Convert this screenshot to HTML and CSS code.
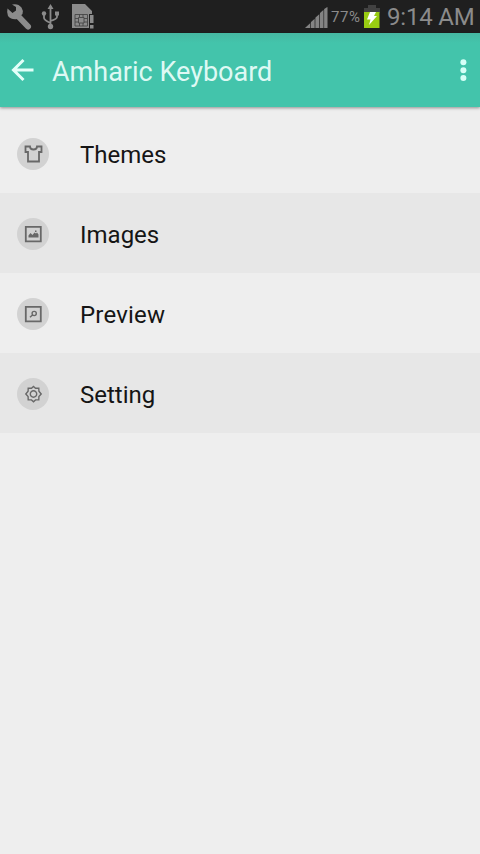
FILE: index.html
```html
<!DOCTYPE html>
<html lang="en">
<head>
<meta charset="utf-8">
<title>Amharic Keyboard</title>
<link rel="stylesheet" href="styles.css">
</head>
<body>
<div class="status">
  <svg class="notices" width="100" height="33" viewBox="0 0 100 33">
    <path d="M17 15L28 26.500" fill="none" stroke="#8b8b8b" stroke-width="6" stroke-linecap="round"/>
    <path d="M7.500 8.500l5 4.500 3.500-2.500 0-3.500-4-2.500q6-1.500 9.500 3 2 3 1 6.500l-5.500 5q-5.500 1-9-3-1.500-3.500-.5-7.500z" fill="#8b8b8b"/>
    <path d="M50.500 8v18M44 15v3q0 2 6.500 5M57 15v2q0 2-6.500 4" fill="none" stroke="#8b8b8b" stroke-width="1.800"/>
    <path d="M50.500 4l3 5h-6zM55 11.500h4v4h-4z" fill="#8b8b8b"/>
    <circle cx="44" cy="13.500" r="2.200" fill="#8b8b8b"/><circle cx="50.500" cy="26.500" r="2.700" fill="#8b8b8b"/>
    <path d="M72 4h13l7 7v3.500h-3V28H72z" fill="#8b8b8b"/>
    <path d="M75 14.500h12.500V26H75zM78.500 17.500h5.500v5.500h-5.500zM75 18.500h3.500M75 22h3.500M84 18.500h3.500M84 22h3.500M79.500 14v3M83 14v3M79.500 23v3M83 23v3" fill="none" stroke="#464646" stroke-width=".9"/>
    <path d="M89 14h5v15h-5z" fill="#202020"/><path d="M90 15h3.500v8H90zM90 25h3.500v3.500H90z" fill="#8b8b8b"/>
  </svg>
  <svg class="signal" width="23" height="22" viewBox="0 0 23 22">
    <path d="M0 21l5-4.500V21zM6 15l3.500-3v9H6zM10.500 10.500l3.500-3V21h-3.500zM15 6l3.300-3v18H15zM19.200 2L22.500 0v21h-3.300z" fill="#858585"/>
    <path d="M0 21L22 0v21z" fill="#858585" opacity=".3"/>
  </svg>
  <span class="percent">77%</span>
  <svg class="battery" width="16" height="23" viewBox="0 0 16 23">
    <path d="M4 0h8v3h4v5H0V3h4z" fill="#424242"/><path d="M0 7h15.500v16H0z" fill="#99cc12"/>
    <path d="M6 7h6l-2 4h3L5 20l1.500-5.500H3z" fill="#fff"/>
  </svg>
  <span class="clock">9:14 AM</span>
</div>
<header class="bar">
  <svg class="back" width="24" height="24" viewBox="0 0 24 24"><path d="M12.500 2L2.500 12l10 10M3 12h19.500" fill="none" stroke="#e3fff9" stroke-width="3"/></svg>
  <h1 class="title">Amharic Keyboard</h1>
  <svg class="more" width="8" height="24" viewBox="0 0 8 24" fill="#d5fff7"><circle cx="4.400" cy="4.200" r="3"/><circle cx="4.400" cy="12.200" r="3"/><circle cx="4.400" cy="20" r="3"/></svg>
</header>
<main class="list">
  <div class="row">
    <svg class="icon" viewBox="0 0 32 32"><circle cx="16" cy="16" r="16"/><path d="M8.500 8.500H13q0 3 3.500 3t3.500-3h4.500v5.500H22v9.500H11V14H8.500z"/></svg>
    <span class="label">Themes</span>
  </div>
  <div class="row shaded">
    <svg class="icon" viewBox="0 0 32 32"><circle cx="16" cy="16" r="16"/><path d="M8.800 8.800h15v14.500h-15z"/><path class="solid" d="M11.500 19.500v-2l2-2.500 2 2 2-2.500 1.500 1 1-1 1.500 2v3zM18 12.500h1.500V14H18z"/></svg>
    <span class="label">Images</span>
  </div>
  <div class="row">
    <svg class="icon" viewBox="0 0 32 32"><circle cx="16" cy="16" r="16"/><path d="M8.800 8.800h15v14.500h-15z"/><path class="thin" d="M15.200 17.200L13 19.300M19.300 15.500a2.100 2.100 0 1 1-4.200 0a2.100 2.100 0 1 1 4.200 0z"/></svg>
    <span class="label preview">Preview</span>
  </div>
  <div class="row shaded">
    <svg class="icon" viewBox="0 0 32 32"><circle cx="16" cy="16" r="16"/><path class="thin" d="M16.500 8.500l2 1.800 3.300-.1.100 3.100 2.300 2.700-2.300 2.500-.1 3.300-3.300.1-2 1.900-2-1.900-3.300-.1-.1-3.300-2.300-2.500 2.300-2.700.1-3.100 3.300.1z"/><path class="thin" d="M19.700 16a3.200 3.200 0 1 1-6.400 0a3.200 3.200 0 1 1 6.400 0z"/></svg>
    <span class="label">Setting</span>
  </div>
</main>
</body>
</html>
```
FILE: styles.css
```css
body {
  margin: 0;
  min-height: 854px;
  background: #eee;
  font-family: Roboto, sans-serif;
}
svg { display: block; flex: none; }
.status {
  display: flex;
  height: 33px;
  background: #1f1f1f;
  color: #8b8b8b;
  white-space: nowrap;
}
.signal { margin: 7px 3px 0 205px; }
.percent {
  width: 31px;
  margin-right: 2px;
  font-size: 15px;
  line-height: 34px;
  letter-spacing: .6px;
}
.battery { margin-top: 5px; }
.clock {
  margin-left: 7px;
  font-size: 24px;
  line-height: 34px;
  letter-spacing: -.2px;
}
.bar {
  position: relative;
  display: flex;
  align-items: center;
  box-sizing: border-box;
  height: 74px;
  padding: 0 13px 0 11px;
  background: linear-gradient(#46b8a2, #43c4ab 10px);
  box-shadow: 0 1px 3px #0006;
}
.title {
  margin: 3px auto 0 17px;
  color: #def9f4;
  font-size: 27px;
  font-weight: 400;
  line-height: 34px;
  white-space: nowrap;
}
.list { padding-top: 6px; }
.row {
  display: flex;
  align-items: center;
  box-sizing: border-box;
  height: 80px;
  padding: 1px 0 0 17px;
}
.shaded { background: #e7e7e7; }
.icon { width: 32px; height: 32px; }
.icon circle { fill: #d2d2d2; }
.icon path { fill: none; stroke: #686868; stroke-width: 1.8; }
.icon .thin { stroke-width: 1.4; }
.icon .solid { fill: #686868; stroke: none; }
.label {
  margin: 3px 0 0 31px;
  color: #151515;
  font-size: 24px;
  line-height: 32px;
}
.preview { letter-spacing: .2px; }
```
